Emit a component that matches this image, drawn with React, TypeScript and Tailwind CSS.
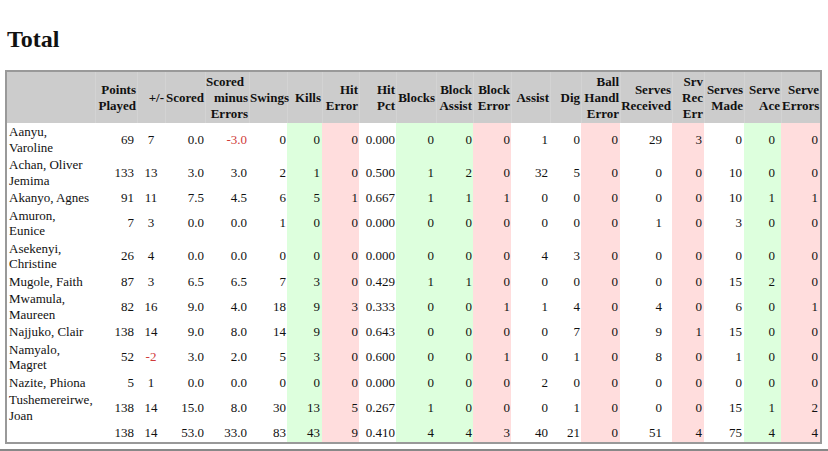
import React from "react";

type Col = { head: string[]; w: string; td: string };

const cols: Col[] = [
  { head: [""], w: "w-[88px]", td: "text-left pl-[2px]" },
  { head: ["Points", "Played"], w: "w-[42px]", td: "text-right pr-[3px]" },
  { head: ["+/-"], w: "w-[28px]", td: "text-center" },
  { head: ["Scored"], w: "w-[40px]", td: "text-right pr-[1px]" },
  { head: ["Scored", "minus", "Errors"], w: "w-[44px]", td: "text-right pr-[2px]" },
  { head: ["Swings"], w: "w-[38px]", td: "text-right pr-[1px]" },
  { head: ["Kills"], w: "w-[35px]", td: "text-right pr-[2px] bg-[#dfd]" },
  { head: ["Hit", "Error"], w: "w-[37px]", td: "text-right pr-[1px] bg-[#fdd]" },
  { head: ["Hit", "Pct"], w: "w-[37px]", td: "text-right pr-[1px]" },
  { head: ["Blocks"], w: "w-[40px]", td: "text-right pr-[2px] bg-[#dfd]" },
  { head: ["Block", "Assist"], w: "w-[37px]", td: "text-right pr-[1px] bg-[#dfd]" },
  { head: ["Block", "Error"], w: "w-[38px]", td: "text-right pr-[1px] bg-[#fdd]" },
  { head: ["Assist"], w: "w-[39px]", td: "text-right pr-[2px]" },
  { head: ["Dig"], w: "w-[31px]", td: "text-right pr-[1px]" },
  { head: ["Ball", "Handl", "Error"], w: "w-[39px]", td: "text-right pr-[2px] bg-[#fdd]" },
  { head: ["Serves", "Received"], w: "w-[52px]", td: "text-right pr-[10px]" },
  { head: ["Srv", "Rec", "Err"], w: "w-[32px]", td: "text-right pr-[2px] bg-[#fdd]" },
  { head: ["Serves", "Made"], w: "w-[40px]", td: "text-right pr-[2px]" },
  { head: ["Serve", "Ace"], w: "w-[37px]", td: "text-right pr-[6px] bg-[#dfd]" },
  { head: ["Serve", "Errors"], w: "w-[39px]", td: "text-right pr-[2px] bg-[#fdd]" },
];

const rows: (string | number)[][] = [
  ["Aanyu,|Varoline", 69, 7, "0.0", "-3.0", 0, 0, 0, "0.000", 0, 0, 0, 1, 0, 0, 29, 3, 0, 0, 0],
  ["Achan, Oliver|Jemima", 133, 13, "3.0", "3.0", 2, 1, 0, "0.500", 1, 2, 0, 32, 5, 0, 0, 0, 10, 0, 0],
  ["Akanyo, Agnes", 91, 11, "7.5", "4.5", 6, 5, 1, "0.667", 1, 1, 1, 0, 0, 0, 0, 0, 10, 1, 1],
  ["Amuron,|Eunice", 7, 3, "0.0", "0.0", 1, 0, 0, "0.000", 0, 0, 0, 0, 0, 0, 1, 0, 3, 0, 0],
  ["Asekenyi,|Christine", 26, 4, "0.0", "0.0", 0, 0, 0, "0.000", 0, 0, 0, 4, 3, 0, 0, 0, 0, 0, 0],
  ["Mugole, Faith", 87, 3, "6.5", "6.5", 7, 3, 0, "0.429", 1, 1, 0, 0, 0, 0, 0, 0, 15, 2, 0],
  ["Mwamula,|Maureen", 82, 16, "9.0", "4.0", 18, 9, 3, "0.333", 0, 0, 1, 1, 4, 0, 4, 0, 6, 0, 1],
  ["Najjuko, Clair", 138, 14, "9.0", "8.0", 14, 9, 0, "0.643", 0, 0, 0, 0, 7, 0, 9, 1, 15, 0, 0],
  ["Namyalo,|Magret", 52, -2, "3.0", "2.0", 5, 3, 0, "0.600", 0, 0, 1, 0, 1, 0, 8, 0, 1, 0, 0],
  ["Nazite, Phiona", 5, 1, "0.0", "0.0", 0, 0, 0, "0.000", 0, 0, 0, 2, 0, 0, 0, 0, 0, 0, 0],
  ["Tushemereirwe,|Joan", 138, 14, "15.0", "8.0", 30, 13, 5, "0.267", 1, 0, 0, 0, 1, 0, 0, 0, 15, 1, 2],
  ["", 138, 14, "53.0", "33.0", 83, 43, 9, "0.410", 4, 4, 3, 40, 21, 0, 51, 4, 75, 4, 4],
];

function Lines({ parts }: { parts: string[] }) {
  return (
    <>
      {parts.map((p, i) => (
        <React.Fragment key={i}>
          {i > 0 && <br />}
          {p}
        </React.Fragment>
      ))}
    </>
  );
}

export default function App() {
  return (
    <div className="w-[828px] h-[451px] overflow-hidden bg-white text-[#111] font-['Liberation_Serif','Times_New_Roman',serif]">
      <h2 className="pl-[7px] pt-[25px] text-[24px] leading-[28px] font-bold">Total</h2>
      <table className="mt-[17px] ml-[5px] w-[817px] table-fixed border-separate border-spacing-0 border-2 border-[#999] text-[13px]">
        <colgroup>
          {cols.map((c, i) => (
            <col key={i} className={c.w} />
          ))}
        </colgroup>
        <thead>
          <tr className="bg-[#ccc]">
            {cols.map((c, i) => (
              <th
                key={i}
                className="h-[51px] align-middle text-right font-bold leading-[16px] pr-[1px] border-l border-[#d3d3d3] first:border-l-0 whitespace-nowrap"
              >
                {i === 4 ? (
                  <>
                    <span className="pr-[10px]">Scored</span>
                    <br />
                    minus
                    <br />
                    Errors
                  </>
                ) : (
                  <Lines parts={c.head} />
                )}
              </th>
            ))}
          </tr>
        </thead>
        <tbody>
          {rows.map((r, ri) => (
            <tr key={ri}>
              {r.map((v, ci) => {
                const s = String(v);
                const neg = ci > 0 && s.startsWith("-");
                return (
                  <td
                    key={ci}
                    className={`${cols[ci].td} align-middle leading-[15.5px] py-px whitespace-nowrap ${neg ? "text-[#d03a3a]" : ""}`}
                  >
                    {ci === 0 ? <Lines parts={s ? s.split("|") : []} /> : s}
                  </td>
                );
              })}
            </tr>
          ))}
        </tbody>
      </table>
      <div className="mt-[5px] h-[2px] w-full bg-[#888]" />
    </div>
  );
}
